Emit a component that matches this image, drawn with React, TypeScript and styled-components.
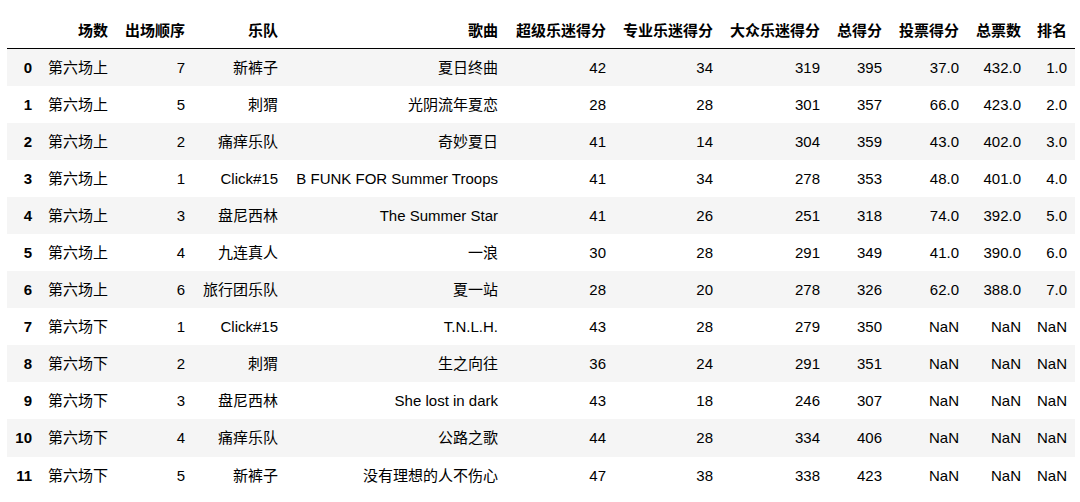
import styled, { createGlobalStyle } from "styled-components";

const GlobalStyle = createGlobalStyle`
  html, body {
    margin: 0;
    padding: 0;
    background: #fff;
  }
  body {
    font-family: "Liberation Sans", "Noto Sans CJK SC", sans-serif;
    color: #000;
  }
`;

const columns = [
  { key: "idx", label: "", width: 33 },
  { key: "场数", label: "场数", width: 76 },
  { key: "出场顺序", label: "出场顺序", width: 77 },
  { key: "乐队", label: "乐队", width: 93 },
  { key: "歌曲", label: "歌曲", width: 220 },
  { key: "超级乐迷得分", label: "超级乐迷得分", width: 108 },
  { key: "专业乐迷得分", label: "专业乐迷得分", width: 107 },
  { key: "大众乐迷得分", label: "大众乐迷得分", width: 107 },
  { key: "总得分", label: "总得分", width: 62 },
  { key: "投票得分", label: "投票得分", width: 77 },
  { key: "总票数", label: "总票数", width: 62 },
  { key: "排名", label: "排名", width: 46 },
];

const rows: (string | number)[][] = [
  ["第六场上", 7, "新裤子", "夏日终曲", 42, 34, 319, 395, "37.0", "432.0", "1.0"],
  ["第六场上", 5, "刺猬", "光阴流年夏恋", 28, 28, 301, 357, "66.0", "423.0", "2.0"],
  ["第六场上", 2, "痛痒乐队", "奇妙夏日", 41, 14, 304, 359, "43.0", "402.0", "3.0"],
  ["第六场上", 1, "Click#15", "B FUNK FOR Summer Troops", 41, 34, 278, 353, "48.0", "401.0", "4.0"],
  ["第六场上", 3, "盘尼西林", "The Summer Star", 41, 26, 251, 318, "74.0", "392.0", "5.0"],
  ["第六场上", 4, "九连真人", "一浪", 30, 28, 291, 349, "41.0", "390.0", "6.0"],
  ["第六场上", 6, "旅行团乐队", "夏一站", 28, 20, 278, 326, "62.0", "388.0", "7.0"],
  ["第六场下", 1, "Click#15", "T.N.L.H.", 43, 28, 279, 350, "NaN", "NaN", "NaN"],
  ["第六场下", 2, "刺猬", "生之向往", 36, 24, 291, 351, "NaN", "NaN", "NaN"],
  ["第六场下", 3, "盘尼西林", "She lost in dark", 43, 18, 246, 307, "NaN", "NaN", "NaN"],
  ["第六场下", 4, "痛痒乐队", "公路之歌", 44, 28, 334, 406, "NaN", "NaN", "NaN"],
  ["第六场下", 5, "新裤子", "没有理想的人不伤心", 47, 38, 338, 423, "NaN", "NaN", "NaN"],
];

export default function App() {
  return (
    <>
      <GlobalStyle />
      <Page>
        <DataFrame>
          <colgroup>
            {columns.map((c) => (
              <col key={c.key} style={{ width: c.width }} />
            ))}
          </colgroup>
          <thead>
            <tr>
              {columns.map((c) => (
                <HeadCell key={c.key}>{c.label}</HeadCell>
              ))}
            </tr>
          </thead>
          <tbody>
            {rows.map((row, i) => (
              <Row key={i} $striped={i % 2 === 0}>
                <IndexCell>{i}</IndexCell>
                {row.map((value, j) => (
                  <Cell key={j}>{value}</Cell>
                ))}
              </Row>
            ))}
          </tbody>
        </DataFrame>
      </Page>
    </>
  );
}

const Page = styled.div`
  padding: 12px 0 0 7px;
`;

const DataFrame = styled.table`
  border-collapse: collapse;
  border-spacing: 0;
  table-layout: fixed;
  width: 1068px;
  font-size: 15px;
  line-height: 21px;
  white-space: nowrap;
`;

const HeadCell = styled.th`
  text-align: right;
  vertical-align: bottom;
  font-weight: bold;
  padding: 8px 8px 7px;
  border-bottom: 1px solid #000;
`;

const Row = styled.tr<{ $striped: boolean }>`
  background: ${(p) => (p.$striped ? "#f5f5f5" : "#fff")};
  height: 37.1px;
`;

const IndexCell = styled.th`
  text-align: right;
  font-weight: bold;
  padding: 0 8px;
`;

const Cell = styled.td`
  text-align: right;
  padding: 0 8px;
`;
